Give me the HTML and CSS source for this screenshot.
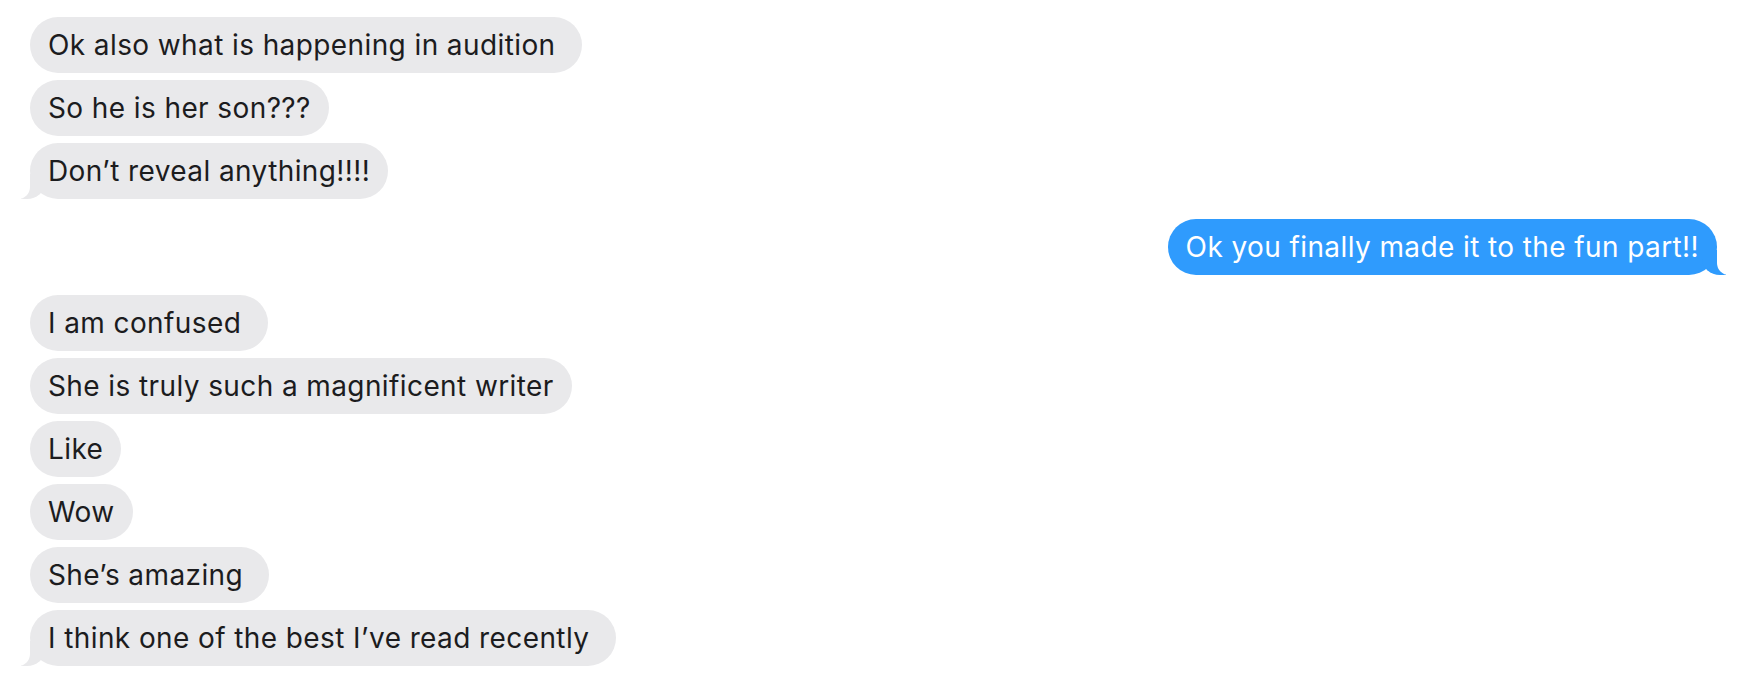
FILE: index.html
```html
<!DOCTYPE html>
<html>
<head>
<meta charset="utf-8">
<link rel="stylesheet" href="styles.css">
</head>
<body>
<div class="chat">
  <div class="group">
    <div class="bubble them">Ok also what is happening in audition </div>
    <div class="bubble them">So he is her son???</div>
    <div class="bubble them tail">Don’t reveal anything!!!!</div>
  </div>
  <div class="group">
    <div class="bubble me tail">Ok you finally made it to the fun part!!</div>
  </div>
  <div class="group">
    <div class="bubble them">I am confused </div>
    <div class="bubble them">She is truly such a magnificent writer</div>
    <div class="bubble them">Like</div>
    <div class="bubble them">Wow</div>
    <div class="bubble them">She’s amazing </div>
    <div class="bubble them tail">I think one of the best I’ve read recently </div>
  </div>
</div>
</body>
</html>
```
FILE: styles.css
```css
html, body {
  margin: 0;
  padding: 0;
  background: #ffffff;
}

.chat {
  display: flex;
  flex-direction: column;
  gap: 20px;
  padding: 17px 27px 0 30px;
  font-family: "Inter", "Roboto", sans-serif;
  font-size: 28px;
  letter-spacing: 0.4px;
}

.group {
  display: flex;
  flex-direction: column;
  gap: 7px;
}

.bubble {
  position: relative;
  white-space: pre;
  line-height: 32px;
  padding: 12px 18px;
  border-radius: 28px;
}

.them {
  align-self: flex-start;
  background: #e9e9eb;
  color: #1c1c1e;
}

.me {
  align-self: flex-end;
  background: #2f9bfd;
  color: #ffffff;
}

.tail::before,
.tail::after {
  content: "";
  position: absolute;
  bottom: 0;
  height: 25px;
}

.them.tail::before {
  left: -9px;
  width: 24px;
  background: #e9e9eb;
  border-bottom-right-radius: 18px 16px;
}

.them.tail::after {
  left: -26px;
  width: 26px;
  background: #ffffff;
  border-bottom-right-radius: 12px;
}

.me.tail::before {
  right: -9px;
  width: 24px;
  background: #2f9bfd;
  border-bottom-left-radius: 18px 16px;
}

.me.tail::after {
  right: -26px;
  width: 26px;
  background: #ffffff;
  border-bottom-left-radius: 12px;
}
```
